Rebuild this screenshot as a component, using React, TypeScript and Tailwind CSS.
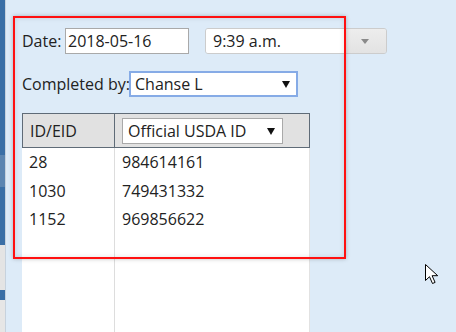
export default function App() {
  return (
    <div className="relative flex w-[456px] h-[332px] overflow-hidden bg-[#ddebf8] font-['Open_Sans',sans-serif] text-[16px] text-[#222]">
      {/* left edge of the page behind */}
      <div className="flex w-[5px] flex-col">
        <div className="h-[155px] bg-[#3a6fa6]" />
        <div className="h-[32px] bg-[#5b85b1]" />
        <div className="h-[58px] bg-[#3a6fa6]" />
        <div className="h-[45px] bg-[#e4e4e4]" />
        <div className="h-[10px] bg-[#3a6fa6]" />
        <div className="flex-1 bg-[#e6e6e6]" />
      </div>
      <div className="w-px bg-[#c7d2dd]" />

      <div className="flex flex-1 flex-col pl-[16px] pt-[28px]">
        {/* date + time */}
        <div className="flex h-[26px] items-center">
          <span className="w-[43px]">Date:</span>
          <div className="flex h-[26px] w-[124px] items-center border border-[#a9a9a9] bg-white pl-[2px]">
            2018-05-16
          </div>
          <div className="ml-[16px] flex h-[26px] w-[182px] overflow-hidden rounded-[3px] border border-[#cccccc]">
            <div className="flex flex-1 items-center bg-white pl-[7px]">9:39 a.m.</div>
            <div className="flex w-[42px] items-center justify-center bg-gradient-to-b from-[#ededed] to-[#e3e3e3]">
              <svg width="8" height="5" viewBox="0 0 8 5">
                <path d="M0 0h8L4 5z" fill="#8a8a8a" />
              </svg>
            </div>
          </div>
        </div>

        {/* completed by */}
        <div className="mt-[17px] flex h-[26px] items-center">
          <span className="w-[107px] whitespace-nowrap">Completed by:</span>
          <div className="flex h-[26px] w-[169px] items-center justify-between border-2 border-[#86abe6] bg-white pl-[4px] pr-[6px]">
            <span>Chanse L</span>
            <svg width="8" height="8" viewBox="0 0 8 8">
              <path d="M0 1h8L4 8z" fill="#111" />
            </svg>
          </div>
        </div>

        {/* table */}
        <div className="mt-[16px] flex w-[288px] flex-1 flex-col">
          <div className="flex h-[35px] border border-[#5f6b77] bg-[#e1e1e1]">
            <div className="flex w-[92px] items-center border-r border-[#5f6b77] pl-[7px]">ID/EID</div>
            <div className="flex flex-1 items-center pl-[7px]">
              <div className="flex h-[26px] w-[161px] items-center justify-between border border-[#a9a9a9] bg-white pl-[5px] pr-[7px]">
                <span>Official USDA ID</span>
                <svg width="8" height="8" viewBox="0 0 8 8">
                  <path d="M0 1h8L4 8z" fill="#111" />
                </svg>
              </div>
            </div>
          </div>
          <div className="flex flex-1 border-r border-[#e2e2e2] bg-white">
            <div className="w-[93px] border-r border-[#dddddd] pl-[7px]">
              {["28", "1030", "1152"].map((v) => (
                <div key={v} className="flex h-[28.5px] items-center">
                  {v}
                </div>
              ))}
            </div>
            <div className="flex-1 pl-[7px]">
              {["984614161", "749431332", "969856622"].map((v) => (
                <div key={v} className="flex h-[28.5px] items-center">
                  {v}
                </div>
              ))}
            </div>
          </div>
        </div>
      </div>

      {/* red highlight box */}
      <div className="absolute left-[13px] top-[16px] h-[243px] w-[333px] border-2 border-[#ff1010] shadow-[0_0_4px_rgba(0,0,0,0.25),inset_0_0_5px_rgba(0,0,0,0.12)]" />

      {/* mouse cursor */}
      <svg className="absolute left-[425px] top-[264px]" width="14" height="22" viewBox="0 0 14 22">
        <path d="M0.5 0.5v16l4-3.8 3 6.8 2.6-1.1-3-6.7h5.6z" fill="#fff" stroke="#000" strokeWidth="1" />
      </svg>
    </div>
  );
}
